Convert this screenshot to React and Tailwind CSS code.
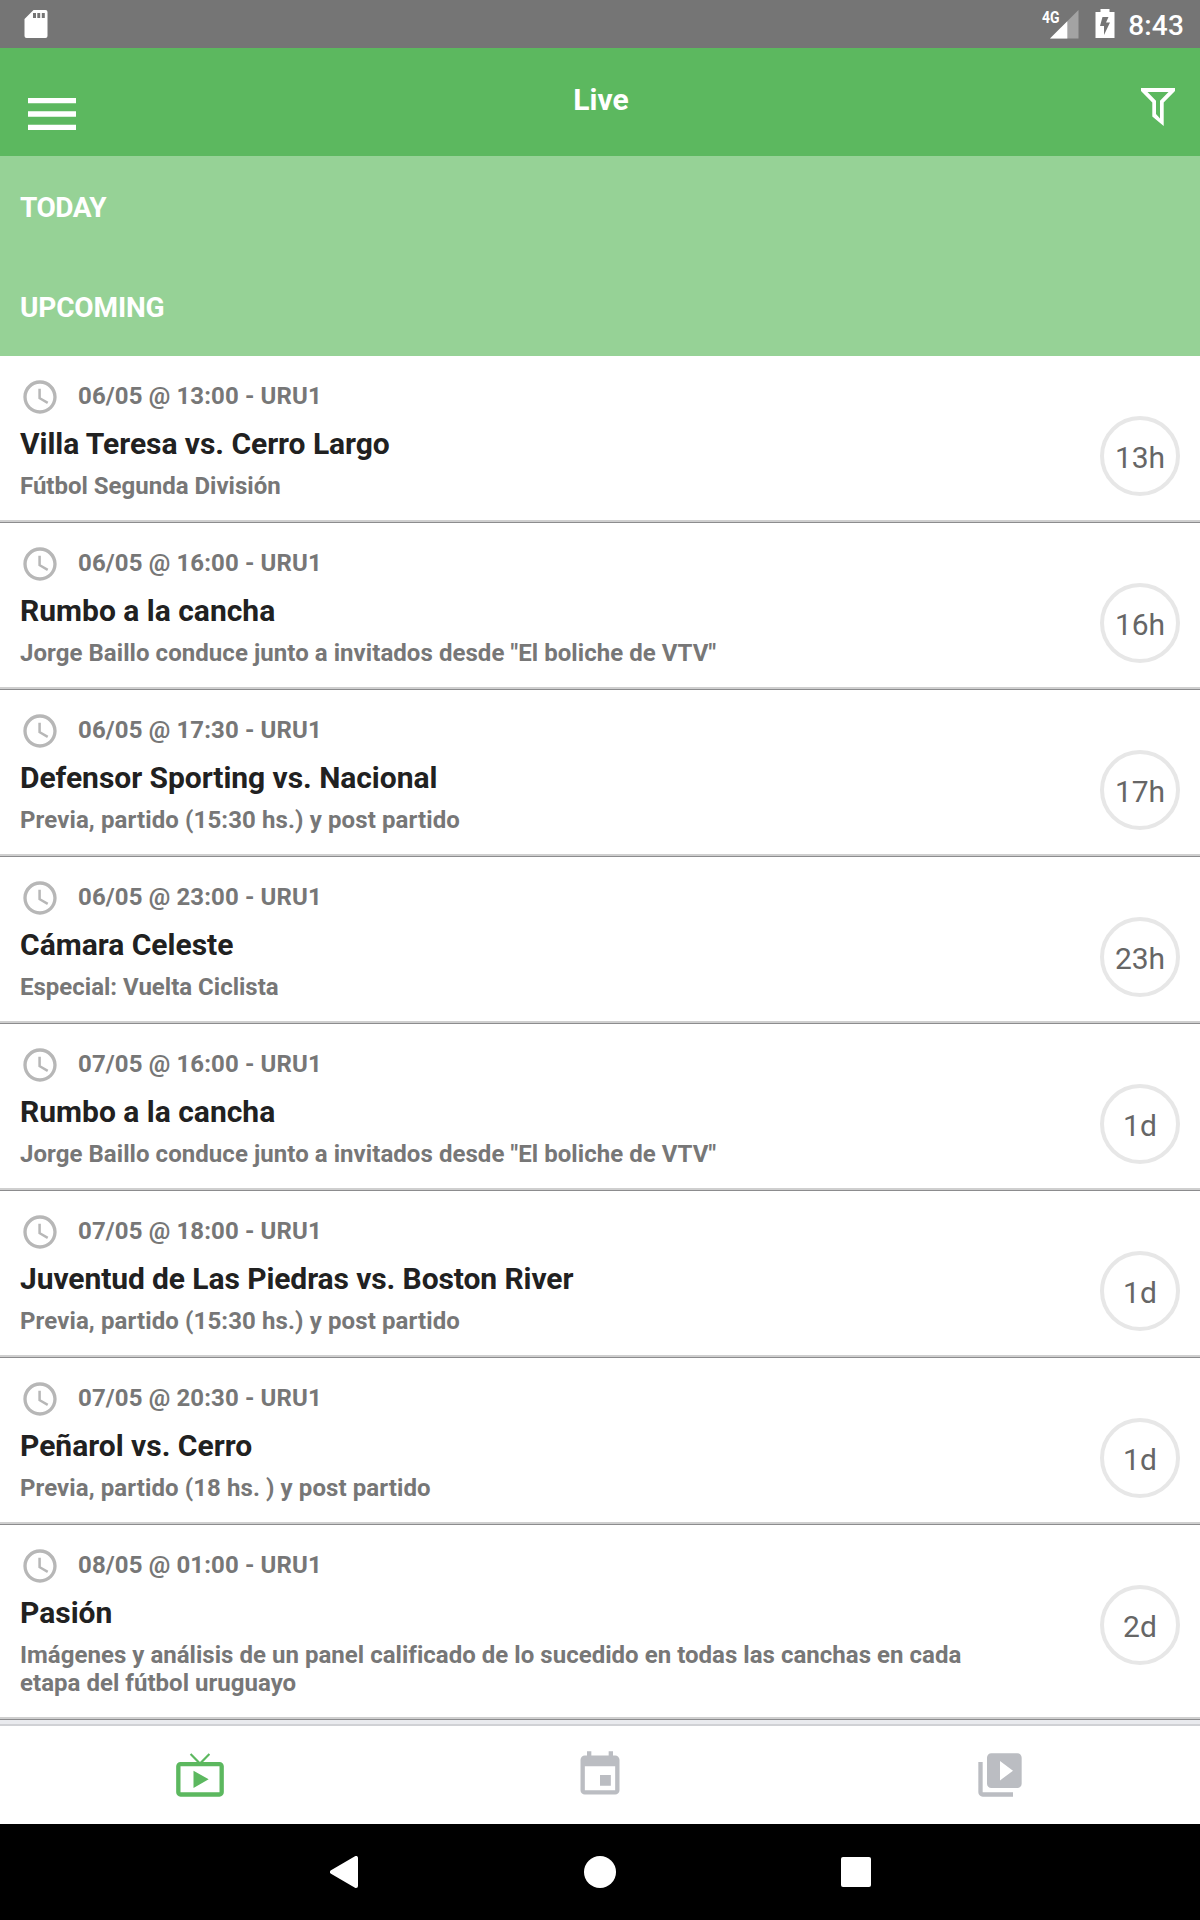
import React from "react";
import { MdAccessTime, MdMenu, MdLiveTv, MdEvent, MdVideoLibrary } from "react-icons/md";

const events = [
  { date: "06/05 @ 13:00 - URU1", title: "Villa Teresa vs. Cerro Largo", text: "Fútbol Segunda División", left: "13h", titleClass: "tracking-[-0.045px]" },
  { date: "06/05 @ 16:00 - URU1", title: "Rumbo a la cancha", text: 'Jorge Baillo conduce junto a invitados desde "El boliche de VTV"', left: "16h", textClass: "tracking-[0.057px]" },
  { date: "06/05 @ 17:30 - URU1", title: "Defensor Sporting vs. Nacional", text: "Previa, partido (15:30 hs.) y post partido", left: "17h", titleClass: "tracking-[-0.045px]", textClass: "tracking-[0.11px]" },
  { date: "06/05 @ 23:00 - URU1", title: "Cámara Celeste", text: "Especial: Vuelta Ciclista", left: "23h" },
  { date: "07/05 @ 16:00 - URU1", title: "Rumbo a la cancha", text: 'Jorge Baillo conduce junto a invitados desde "El boliche de VTV"', left: "1d", textClass: "tracking-[0.057px]" },
  { date: "07/05 @ 18:00 - URU1", title: "Juventud de Las Piedras vs. Boston River", text: "Previa, partido (15:30 hs.) y post partido", left: "1d", titleClass: "tracking-[-0.09px]", textClass: "tracking-[0.11px]" },
  { date: "07/05 @ 20:30 - URU1", title: "Peñarol vs. Cerro", text: "Previa, partido (18 hs. ) y post partido", left: "1d", textClass: "tracking-[0.09px]" },
  { date: "08/05 @ 01:00 - URU1", title: "Pasión", text: "Imágenes y análisis de un panel calificado de lo sucedido en todas las canchas en cada etapa del fútbol uruguayo", left: "2d", textClass: "tracking-[0.028px]" },
];

function StatusBar() {
  return (
    <div className="flex h-12 items-start bg-[#757575] text-white">
      <svg className="mt-[10px] ml-6 h-7 w-6" viewBox="0 0 24 28">
        <path fillRule="evenodd" fill="#fff" d="M9.5 0H21.5Q23.5 0 23.5 2V26Q23.5 28 21.5 28H2.5Q.5 28 .5 26V9ZM9 3V8H12V3ZM13.3 3V8H16.2V3ZM17.8 3V8H20.8V3Z" />
      </svg>
      <div className="ml-auto flex pr-4">
        <span className="mt-[7px] -mr-[13px] origin-left scale-x-[0.82] text-[17px] leading-5 font-bold">4G</span>
        <svg className="mt-[10px] h-[29px] w-[29px]" viewBox="0 0 29 29">
          <path d="M28.5 0V28.5H0Z" fill="#a3a3a3" />
          <path d="M17.3 11.2V28.5H0Z" fill="#fff" />
        </svg>
        <svg className="mt-[9px] ml-4 h-[29px] w-5" viewBox="0 0 20 29">
          <path fillRule="evenodd" fill="#fff" d="M5.5 0H14.5V3H19.5V29H.5V3H5.5ZM7.5 8L5 17H9V26L15 13.5H11L13.5 8Z" />
        </svg>
        <span className="mt-[9px] ml-[13px] text-[28px] leading-[33px] font-medium tracking-[0.15px]">8:43</span>
      </div>
    </div>
  );
}

function Header() {
  return (
    <header className="grid h-[108px] grid-cols-3 bg-[#5cb85f] text-white">
      <MdMenu className="mt-[34px] ml-5 h-16 w-16" />
      <h1 className="mt-[34px] pl-[2px] text-center text-[30px] leading-[35px] font-bold">Live</h1>
      <svg className="mt-10 mr-[25px] h-[38px] w-[34px] justify-self-end" viewBox="0 0 34 38">
        <path fillRule="evenodd" fill="currentColor" d="M0 0H34V3L22.7 14.5V38L11.3 28.5V14.5L0 3ZM6.5 4L15 12.8V26L19 30.5V12.8L27.5 4Z" />
      </svg>
    </header>
  );
}

function SectionTitle({ children, className }) {
  return (
    <h2 className={`h-[100px] bg-[#96d296] px-5 pt-[35px] text-[28px] leading-[33px] font-bold text-white ${className}`}>
      {children}
    </h2>
  );
}

function EventRow({ event }) {
  return (
    <li className="flex justify-between border-b-2 border-[#cfcfcf] px-5 pb-5">
      <div className="w-[980px] pt-[26px]">
        <div className="flex h-7 items-center">
          <MdAccessTime className="mt-[2px] h-10 w-10 text-[#b7b7b7]" />
          <p className="ml-[18px] text-[24px] leading-7 font-bold tracking-[0.12px] text-[#777]">{event.date}</p>
        </div>
        <h3 className={`mt-4 text-[30px] leading-[35px] font-bold text-[#212121] ${event.titleClass ?? ""}`}>{event.title}</h3>
        <p className={`mt-[11px] text-[24px] leading-7 font-bold text-[#777] ${event.textClass ?? ""}`}>{event.text}</p>
      </div>
      <div className="mt-[60px] flex h-20 w-20 shrink-0 items-center justify-center rounded-full border-4 border-[#e7e7e7] pt-[3px] text-[30px] leading-[35px] text-[#666]">
        {event.left}
      </div>
    </li>
  );
}

export default function App() {
  return (
    <div className="flex h-[1920px] w-[1200px] flex-col overflow-hidden bg-white font-['Roboto',sans-serif]">
      <StatusBar />
      <Header />
      <SectionTitle className="tracking-[-0.5px]">TODAY</SectionTitle>
      <SectionTitle className="tracking-[-0.15px]">UPCOMING</SectionTitle>
      <ul>
        {events.map((event, i) => (
          <React.Fragment key={i}>
            <EventRow event={event} />
            <li className="h-px bg-[#8c8c8e]" />
          </React.Fragment>
        ))}
      </ul>
      <div className="h-1 bg-[#e9eaee]" />
      <nav className="grid h-[100px] grid-cols-3 items-center justify-items-center border-t-2 border-[#d0d1d5] text-[#bbbdc2]">
        <MdLiveTv className="h-[52px] w-[52px] text-[#5cb85f]" />
        <MdEvent className="h-[52px] w-[52px]" />
        <MdVideoLibrary className="h-[52px] w-[52px]" />
      </nav>
      <div className="flex h-24 items-center bg-black pl-[330px]">
        <svg className="h-8 w-7" viewBox="0 0 28 32">
          <path d="M26 2V30L2 16Z" fill="#fff" stroke="#fff" strokeWidth="4" strokeLinejoin="round" />
        </svg>
        <div className="ml-[226px] h-8 w-8 rounded-full bg-white" />
        <div className="ml-[225px] h-[30px] w-[30px] rounded-[2px] bg-white" />
      </div>
    </div>
  );
}
